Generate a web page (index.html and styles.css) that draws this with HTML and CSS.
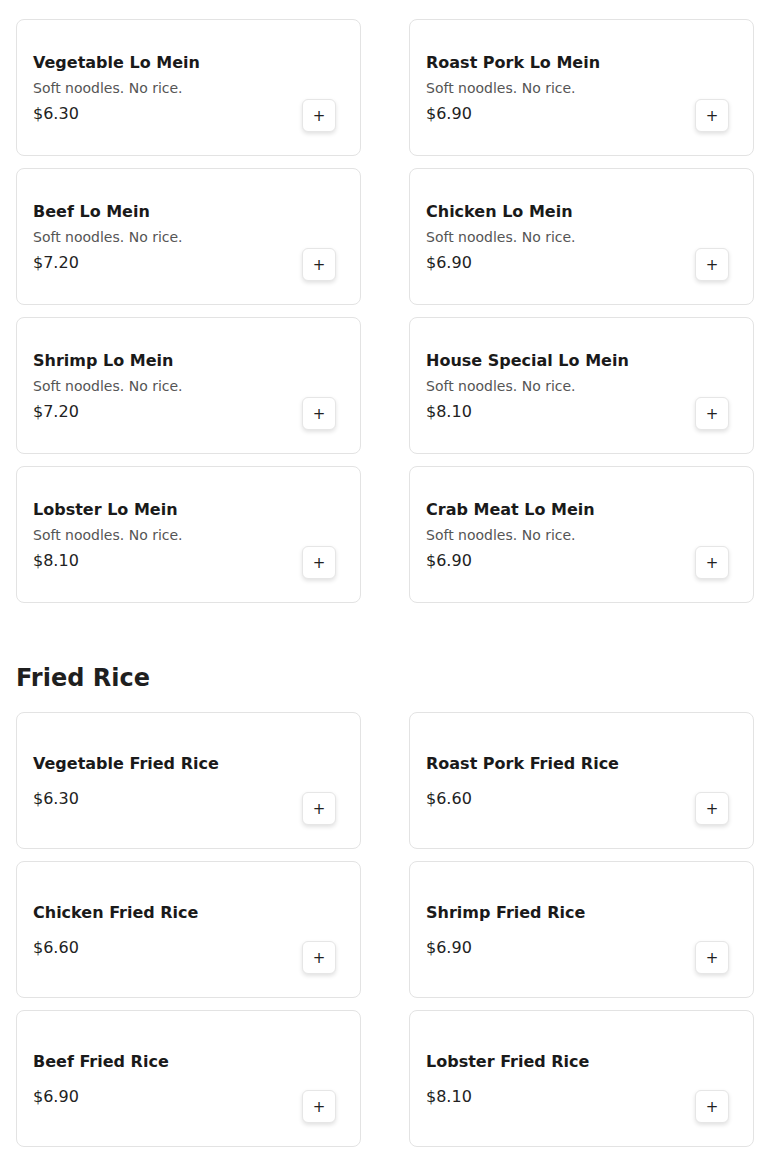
FILE: index.html
```html
<!DOCTYPE html>
<html lang="en">
<head>
    <meta charset="UTF-8">
    <meta name="viewport" content="width=device-width, initial-scale=1.0">
    <title>Menu</title>
    <link rel="stylesheet" href="styles.css">
</head>
<body>
    <div id="menu">
        <section class="group">
            <div class="items">
                <div class="item">
                    <div class="info">
                        <h3>Vegetable Lo Mein</h3>
                        <p class="desc">Soft noodles. No rice.</p>
                        <p class="price">$6.30</p>
                    </div>
                    <button class="add">+</button>
                </div>
                <div class="item">
                    <div class="info">
                        <h3>Roast Pork Lo Mein</h3>
                        <p class="desc">Soft noodles. No rice.</p>
                        <p class="price">$6.90</p>
                    </div>
                    <button class="add">+</button>
                </div>
                <div class="item">
                    <div class="info">
                        <h3>Beef Lo Mein</h3>
                        <p class="desc">Soft noodles. No rice.</p>
                        <p class="price">$7.20</p>
                    </div>
                    <button class="add">+</button>
                </div>
                <div class="item">
                    <div class="info">
                        <h3>Chicken Lo Mein</h3>
                        <p class="desc">Soft noodles. No rice.</p>
                        <p class="price">$6.90</p>
                    </div>
                    <button class="add">+</button>
                </div>
                <div class="item">
                    <div class="info">
                        <h3>Shrimp Lo Mein</h3>
                        <p class="desc">Soft noodles. No rice.</p>
                        <p class="price">$7.20</p>
                    </div>
                    <button class="add">+</button>
                </div>
                <div class="item">
                    <div class="info">
                        <h3>House Special Lo Mein</h3>
                        <p class="desc">Soft noodles. No rice.</p>
                        <p class="price">$8.10</p>
                    </div>
                    <button class="add">+</button>
                </div>
                <div class="item">
                    <div class="info">
                        <h3>Lobster Lo Mein</h3>
                        <p class="desc">Soft noodles. No rice.</p>
                        <p class="price">$8.10</p>
                    </div>
                    <button class="add">+</button>
                </div>
                <div class="item">
                    <div class="info">
                        <h3>Crab Meat Lo Mein</h3>
                        <p class="desc">Soft noodles. No rice.</p>
                        <p class="price">$6.90</p>
                    </div>
                    <button class="add">+</button>
                </div>
            </div>
        </section>

        <section class="group">
            <h2>Fried Rice</h2>
            <div class="items">
                <div class="item">
                    <div class="info">
                        <h3>Vegetable Fried Rice</h3>
                        <p class="price">$6.30</p>
                    </div>
                    <button class="add">+</button>
                </div>
                <div class="item">
                    <div class="info">
                        <h3>Roast Pork Fried Rice</h3>
                        <p class="price">$6.60</p>
                    </div>
                    <button class="add">+</button>
                </div>
                <div class="item">
                    <div class="info">
                        <h3>Chicken Fried Rice</h3>
                        <p class="price">$6.60</p>
                    </div>
                    <button class="add">+</button>
                </div>
                <div class="item">
                    <div class="info">
                        <h3>Shrimp Fried Rice</h3>
                        <p class="price">$6.90</p>
                    </div>
                    <button class="add">+</button>
                </div>
                <div class="item">
                    <div class="info">
                        <h3>Beef Fried Rice</h3>
                        <p class="price">$6.90</p>
                    </div>
                    <button class="add">+</button>
                </div>
                <div class="item">
                    <div class="info">
                        <h3>Lobster Fried Rice</h3>
                        <p class="price">$8.10</p>
                    </div>
                    <button class="add">+</button>
                </div>
            </div>
        </section>
    </div>
</body>
</html>
```

FILE: styles.css
```css
*{
    margin: 0;
    padding: 0;
    box-sizing: border-box;
}
body{
    font-family: "DejaVu Sans", sans-serif;
    background-color: #fff;
    color: #1a1a1a;
}
#menu{
    padding: 19px 16px 0;
}
.group + .group{
    margin-top: 60px;
}
.group h2{
    font-size: 24px;
    line-height: 30px;
    font-weight: bold;
    color: #1f1f1f;
    margin-bottom: 19px;
}
.items{
    display: grid;
    grid-template-columns: 1fr 1fr;
    column-gap: 48px;
    row-gap: 12px;
}
.item{
    height: 137px;
    border: 1px solid #e3e3e3;
    border-radius: 8px;
    padding: 0 16px;
    display: flex;
    justify-content: space-between;
    align-items: center;
}
.info{
    padding-top: 2px;
}
.info h3{
    font-size: 16px;
    line-height: 20px;
    font-weight: bold;
    color: #1a1a1a;
}
.desc{
    font-size: 14px;
    line-height: 19px;
    color: #555;
    margin-top: 6px;
}
.price{
    font-size: 16px;
    line-height: 22px;
    color: #222;
    margin-top: 14px;
}
.desc + .price{
    margin-top: 5px;
}
.add{
    align-self: flex-end;
    margin: 0 8px 23px 0;
    width: 34px;
    height: 33px;
    border: 1px solid #e6e6e6;
    border-radius: 6px;
    background-color: #fff;
    box-shadow: 0 2px 4px rgba(0, 0, 0, .12);
    font-family: "DejaVu Sans", sans-serif;
    font-size: 15px;
    color: #222;
    cursor: pointer;
}
```
